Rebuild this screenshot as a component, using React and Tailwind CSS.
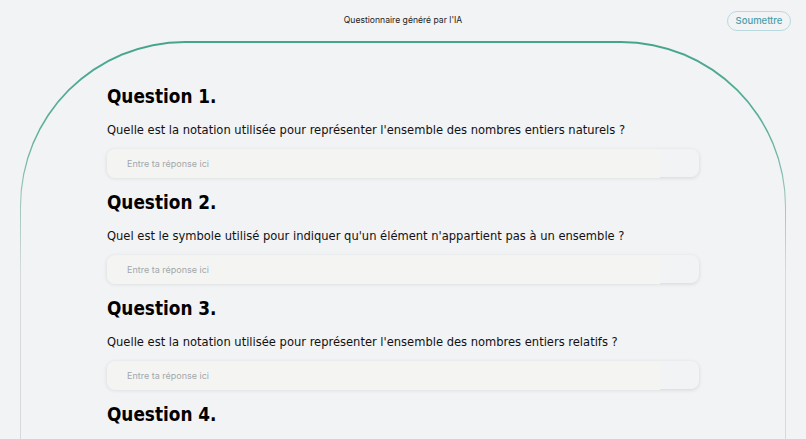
const questions = [
  "Quelle est la notation utilisée pour représenter l'ensemble des nombres entiers naturels ?",
  "Quel est le symbole utilisé pour indiquer qu'un élément n'appartient pas à un ensemble ?",
  "Quelle est la notation utilisée pour représenter l'ensemble des nombres entiers relatifs ?",
  "",
];

function QuestionBlock({ index, text }) {
  return (
    <div className="flex flex-col">
      <h2 className="font-['DejaVu_Sans_Condensed','DejaVu_Sans',sans-serif] text-[18.8px] font-bold leading-[22px] text-black">
        Question {index}.
      </h2>
      {text && (
        <>
          <p className="mt-[13px] font-['DejaVu_Sans_Condensed','DejaVu_Sans',sans-serif] text-[12.8px] leading-[18px] text-[#111]">
            {text}
          </p>
          <div className="mt-[10px] h-[28px] w-[592px] rounded-[8px] bg-[#f2f3f4] shadow-[0_1px_4px_rgba(0,0,0,0.12)]">
            <input
              placeholder="Entre ta réponse ici"
              className="h-full w-[553px] rounded-l-[8px] bg-[#f4f5f2] pl-[20px] font-['Inter',sans-serif] text-[9px] text-gray-700 outline-none placeholder:text-[#a3a6aa]"
            />
          </div>
        </>
      )}
    </div>
  );
}

export default function App() {
  return (
    <div className="h-[439px] w-full overflow-hidden bg-[#f2f3f5]">
      {/* top bar */}
      <div className="relative flex h-[41px] items-center justify-center">
        <span className="font-['Inter',sans-serif] text-[8.6px] text-[#222]">Questionnaire généré par l'IA</span>
        <button className="absolute right-[15px] top-[11px] h-[20px] w-[64px] rounded-full border border-[#b9d9de] font-['Inter',sans-serif] text-[9.5px] font-medium text-[#4aa0ab]">
          Soumettre
        </button>
      </div>

      {/* rounded sheet with a teal-to-grey outline */}
      <div className="mx-[20px] h-[600px] rounded-t-[165px] bg-[linear-gradient(to_bottom,#44a58c_0px,#5fb09c_90px,#d6dadd_230px)] px-[1px] pt-[2px]">
        <div className="h-full rounded-t-[164px] bg-[#f2f3f5] pl-[86px] pt-[43px]">
          <div className="flex flex-col gap-[15px]">
            {questions.map((q, i) => (
              <QuestionBlock key={i} index={i + 1} text={q} />
            ))}
          </div>
        </div>
      </div>
    </div>
  );
}
